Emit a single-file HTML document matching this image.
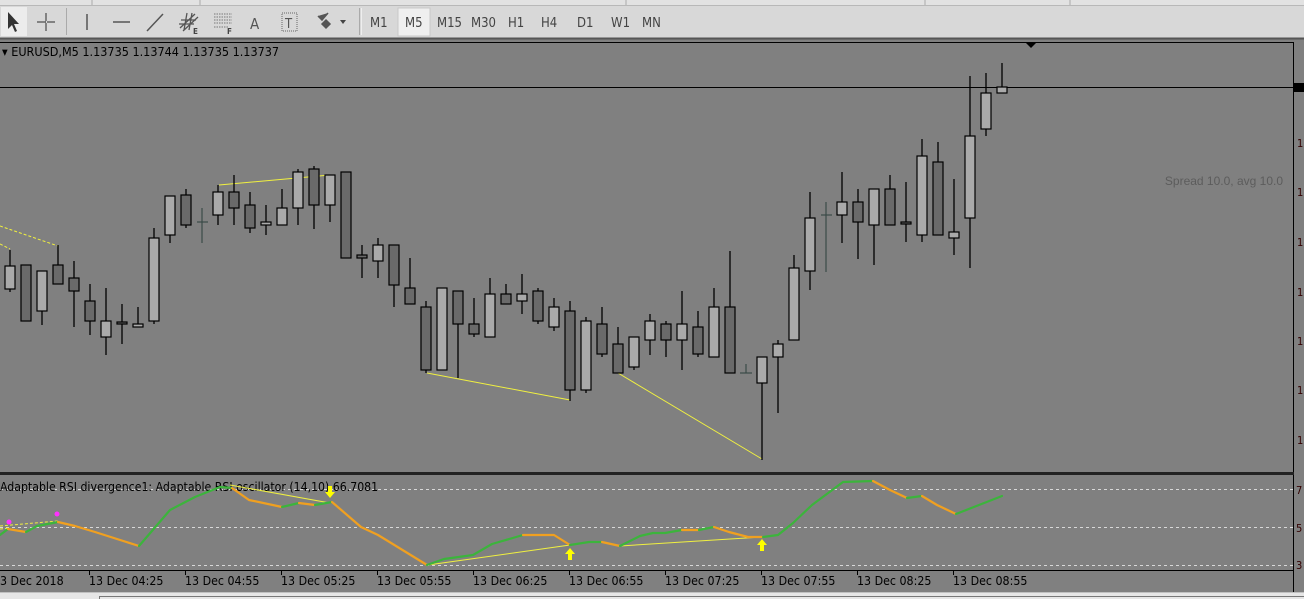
<!DOCTYPE html>
<html><head><meta charset="utf-8"><style>
html,body{margin:0;padding:0;width:1304px;height:599px;overflow:hidden;background:#808080;font-family:"DejaVu Sans Condensed","Liberation Sans",sans-serif}
svg{display:block}
</style></head><body>
<svg width="1304" height="599" viewBox="0 0 1304 599" xmlns="http://www.w3.org/2000/svg" font-family="DejaVu Sans Condensed, Liberation Sans, sans-serif">
<!-- toolbar -->
<rect x="0" y="0" width="1304" height="39" fill="#d8d8d8"/>
<rect x="0" y="0" width="1304" height="5" fill="#e2e2e2"/>
<line x1="0" y1="5.5" x2="1304" y2="5.5" stroke="#b8b8b8"/>
<line x1="92" y1="0" x2="92" y2="5" stroke="#aaa"/>
<line x1="200" y1="0" x2="200" y2="5" stroke="#aaa"/>
<line x1="626" y1="0" x2="626" y2="5" stroke="#aaa"/>
<line x1="925" y1="0" x2="925" y2="5" stroke="#aaa"/>
<line x1="1070" y1="0" x2="1070" y2="5" stroke="#aaa"/>
<rect x="1" y="7" width="26" height="29" fill="#ececec"/>
<path d="M8 12 L8 29 L12 25 L15 32 L17 31 L14 24 L19 24 Z" fill="#333"/>
<path d="M46 13 V31 M37 22 H55" stroke="#666" stroke-width="1.5"/>
<rect x="46" y="21" width="1" height="2" fill="#d8d8d8"/>
<line x1="66.5" y1="8" x2="66.5" y2="35" stroke="#aaa"/>
<line x1="87" y1="14" x2="87" y2="30" stroke="#555" stroke-width="1.5"/>
<line x1="113" y1="22" x2="130" y2="22" stroke="#555" stroke-width="1.5"/>
<line x1="147" y1="31" x2="163" y2="14" stroke="#555" stroke-width="1.5"/>
<path d="M180 28 L195 14 M183 31 L198 17 M179 24 L194 24 M181 20 L196 20 M184 30 L187 13 M189 30 L192 13" stroke="#555" stroke-width="1.3"/>
<text x="193" y="34" font-size="8" font-weight="bold" fill="#444">E</text>
<path d="M214 14 H232 M214 17 H232 M214 20 H232 M214 23 H232 M214 27 H228" stroke="#777" stroke-dasharray="1.5 1" stroke-width="1"/>
<text x="227" y="34" font-size="8" font-weight="bold" fill="#444">F</text>
<text x="250" y="29" font-size="15" fill="#555">A</text>
<rect x="282" y="13" width="15" height="18" fill="none" stroke="#666" stroke-dasharray="1 1"/>
<text x="285" y="28" font-size="13" fill="#555">T</text>
<path d="M318 16 L322 20 L328 13 M322 24 L326 20 L330 24 L326 28 Z" stroke="#555" stroke-width="1.5" fill="#555"/>
<path d="M340 20 L346 20 L343 24 Z" fill="#444"/>
<line x1="359.5" y1="8" x2="359.5" y2="35" stroke="#aaa"/>
<line x1="361.5" y1="8" x2="361.5" y2="35" stroke="#eee"/>
<rect x="398" y="8" width="32" height="28" fill="#efefef" stroke="#c8c8c8"/>
<g font-size="13" fill="#444">
<text x="370" y="27">M1</text><text x="405" y="27">M5</text><text x="437" y="27">M15</text><text x="471" y="27">M30</text><text x="508" y="27">H1</text><text x="541" y="27">H4</text><text x="577" y="27">D1</text><text x="611" y="27">W1</text><text x="642" y="27">MN</text>
</g>
<line x1="0" y1="38.5" x2="1304" y2="38.5" stroke="#555" stroke-width="2"/>
<!-- frames -->
<path d="M0 42.5 H1293.5 V592" fill="none" stroke="#000"/>
<rect x="0" y="472" width="1294" height="3" fill="#222"/>
<line x1="0" y1="570.5" x2="1294" y2="570.5" stroke="#000"/>
<line x1="0" y1="87.5" x2="1293" y2="87.5" stroke="#000"/>
<rect x="1294" y="83" width="10" height="9" fill="#000"/>
<path d="M1025 42 L1037 42 L1031 48 Z" fill="#000"/>
<g font-size="11" fill="#300">
<text x="1297" y="147">1</text><text x="1297" y="196">1</text><text x="1297" y="246">1</text><text x="1297" y="296">1</text><text x="1297" y="345">1</text><text x="1297" y="394">1</text><text x="1297" y="444">1</text>
<text x="1296" y="494">7</text><text x="1296" y="532">5</text><text x="1296" y="569">3</text>
</g>
<text x="2" y="56" font-size="12.5" fill="#000">▾ EURUSD,M5  1.13735 1.13744 1.13735 1.13737</text>
<text x="1283" y="185" font-size="12" fill="#5c5c5c" text-anchor="end" font-family="Liberation Sans, sans-serif">Spread 10.0, avg 10.0</text>
<!-- yellow lines main -->
<g stroke="#f0f040" stroke-width="1" fill="none">
<line x1="219" y1="185" x2="330" y2="175"/>
<line x1="427" y1="373" x2="570" y2="400"/>
<line x1="618" y1="373" x2="762" y2="459"/>
<line x1="0" y1="226" x2="58" y2="246" stroke-dasharray="3 2"/>
<line x1="0" y1="244" x2="10" y2="249" stroke-dasharray="3 2"/>
</g>
<!-- candles -->
<g stroke="#000" stroke-width="1.3">
<line x1="10" y1="250" x2="10" y2="292"/><line x1="26" y1="265" x2="26" y2="321"/><line x1="42" y1="271" x2="42" y2="325"/><line x1="58" y1="245" x2="58" y2="284"/><line x1="74" y1="261" x2="74" y2="327"/><line x1="90" y1="284" x2="90" y2="335"/><line x1="106" y1="288" x2="106" y2="355"/><line x1="122" y1="304" x2="122" y2="344"/><line x1="138" y1="307" x2="138" y2="327"/><line x1="154" y1="228" x2="154" y2="324"/><line x1="170" y1="196" x2="170" y2="243"/><line x1="186" y1="189" x2="186" y2="228"/><line x1="218" y1="185" x2="218" y2="225"/><line x1="234" y1="175" x2="234" y2="225"/><line x1="250" y1="192" x2="250" y2="233"/><line x1="266" y1="205" x2="266" y2="235"/><line x1="282" y1="189" x2="282" y2="225"/><line x1="298" y1="169" x2="298" y2="225"/><line x1="314" y1="166" x2="314" y2="229"/><line x1="330" y1="175" x2="330" y2="222"/><line x1="362" y1="245" x2="362" y2="278"/><line x1="378" y1="238" x2="378" y2="278"/><line x1="394" y1="245" x2="394" y2="307"/><line x1="410" y1="258" x2="410" y2="304"/>
<line x1="426" y1="301" x2="426" y2="373"/><line x1="458" y1="291" x2="458" y2="378"/><line x1="474" y1="298" x2="474" y2="337"/><line x1="490" y1="278" x2="490" y2="337"/><line x1="506" y1="284" x2="506" y2="304"/><line x1="522" y1="274" x2="522" y2="314"/><line x1="538" y1="288" x2="538" y2="324"/><line x1="554" y1="298" x2="554" y2="331"/><line x1="570" y1="301" x2="570" y2="401"/><line x1="586" y1="317" x2="586" y2="393"/><line x1="602" y1="307" x2="602" y2="357"/><line x1="618" y1="327" x2="618" y2="373"/><line x1="634" y1="337" x2="634" y2="370"/><line x1="650" y1="314" x2="650" y2="355"/><line x1="666" y1="321" x2="666" y2="357"/><line x1="682" y1="291" x2="682" y2="370"/><line x1="698" y1="311" x2="698" y2="357"/><line x1="714" y1="288" x2="714" y2="357"/><line x1="730" y1="251" x2="730" y2="373"/><line x1="762" y1="357" x2="762" y2="460"/><line x1="778" y1="340" x2="778" y2="413"/><line x1="794" y1="255" x2="794" y2="340"/>
<line x1="810" y1="192" x2="810" y2="290"/><line x1="842" y1="172" x2="842" y2="243"/><line x1="858" y1="189" x2="858" y2="259"/><line x1="874" y1="189" x2="874" y2="265"/><line x1="890" y1="175" x2="890" y2="225"/><line x1="906" y1="182" x2="906" y2="242"/><line x1="922" y1="139" x2="922" y2="242"/><line x1="938" y1="142" x2="938" y2="235"/><line x1="954" y1="179" x2="954" y2="255"/><line x1="970" y1="76" x2="970" y2="268"/><line x1="986" y1="73" x2="986" y2="136"/><line x1="1002" y1="63" x2="1002" y2="93"/>
</g>
<g stroke="#000" stroke-width="1.2" fill="#aaaaaa">
<rect x="5" y="266" width="10" height="23"/><rect x="37" y="271" width="10" height="40"/><rect x="101" y="321" width="10" height="16"/><rect x="133" y="324" width="10" height="3"/><rect x="149" y="238" width="10" height="83"/><rect x="165" y="196" width="10" height="39"/><rect x="213" y="192" width="10" height="23"/><rect x="261" y="222" width="10" height="3"/><rect x="277" y="208" width="10" height="17"/><rect x="293" y="172" width="10" height="36"/><rect x="325" y="175" width="10" height="30"/><rect x="373" y="245" width="10" height="16"/>
<rect x="437" y="288" width="10" height="82"/><rect x="485" y="294" width="10" height="43"/><rect x="517" y="294" width="10" height="7"/><rect x="549" y="307" width="10" height="20"/><rect x="581" y="321" width="10" height="69"/><rect x="629" y="337" width="10" height="30"/><rect x="645" y="321" width="10" height="19"/><rect x="677" y="324" width="10" height="16"/><rect x="709" y="307" width="10" height="50"/><rect x="757" y="357" width="10" height="26"/><rect x="773" y="344" width="10" height="13"/><rect x="789" y="268" width="10" height="72"/>
<rect x="805" y="218" width="10" height="53"/><rect x="837" y="202" width="10" height="13"/><rect x="869" y="189" width="10" height="36"/><rect x="917" y="156" width="10" height="79"/><rect x="949" y="232" width="10" height="6"/><rect x="965" y="136" width="10" height="82"/><rect x="981" y="93" width="10" height="36"/><rect x="997" y="87" width="10" height="6"/>
</g>
<g stroke="#000" stroke-width="1.2" fill="#6a6a6a">
<rect x="21" y="265" width="10" height="56"/><rect x="53" y="265" width="10" height="19"/><rect x="69" y="278" width="10" height="13"/><rect x="85" y="301" width="10" height="20"/><rect x="117" y="322" width="10" height="2"/><rect x="181" y="195" width="10" height="30"/><rect x="229" y="192" width="10" height="16"/><rect x="245" y="205" width="10" height="23"/><rect x="309" y="169" width="10" height="36"/><rect x="341" y="172" width="10" height="86"/><rect x="357" y="255" width="10" height="3"/><rect x="389" y="245" width="10" height="40"/><rect x="405" y="288" width="10" height="16"/>
<rect x="421" y="307" width="10" height="63"/><rect x="453" y="291" width="10" height="33"/><rect x="469" y="324" width="10" height="10"/><rect x="501" y="294" width="10" height="10"/><rect x="533" y="291" width="10" height="30"/><rect x="565" y="311" width="10" height="79"/><rect x="597" y="324" width="10" height="30"/><rect x="613" y="344" width="10" height="29"/><rect x="661" y="324" width="10" height="16"/><rect x="693" y="327" width="10" height="27"/><rect x="725" y="307" width="10" height="66"/>
<rect x="853" y="202" width="10" height="20"/><rect x="885" y="189" width="10" height="36"/><rect x="901" y="222" width="10" height="2"/><rect x="933" y="162" width="10" height="73"/>
</g>
<g stroke="#3a4a48" stroke-width="1.2">
<line x1="202" y1="208" x2="202" y2="243"/><line x1="197" y1="222" x2="208" y2="222"/>
<line x1="746" y1="364" x2="746" y2="373"/><line x1="740" y1="373" x2="752" y2="373"/>
<line x1="826" y1="202" x2="826" y2="272"/><line x1="821" y1="215" x2="832" y2="215"/>
</g>
<!-- subwindow -->
<g stroke="#d8d8d8" stroke-dasharray="3 3" stroke-width="1">
<line x1="0" y1="489.5" x2="1293" y2="489.5"/><line x1="0" y1="527.5" x2="1293" y2="527.5"/><line x1="0" y1="565.5" x2="1293" y2="565.5"/>
</g>
<text x="0" y="491" font-size="12.2" fill="#000">Adaptable RSI divergence1: Adaptable RSI oscillator (14,10) 66.7081</text>
<g stroke="#f0f040" stroke-width="1" fill="none">
<line x1="230" y1="485" x2="330" y2="503"/>
<line x1="428" y1="565" x2="570" y2="545"/>
<line x1="620" y1="546" x2="762" y2="537"/>
<line x1="0" y1="526" x2="58" y2="521" stroke-dasharray="3 2"/>
<line x1="0" y1="529" x2="10" y2="528" stroke-dasharray="3 2"/>
</g>
<g fill="none" stroke-width="2.2" stroke-linejoin="round" stroke-linecap="round">
<polyline stroke="#3cb43c" points="0,535 8,529"/>
<polyline stroke="#f0a020" points="8,529 26,532"/>
<polyline stroke="#3cb43c" points="26,532 37,526 58,522"/>
<polyline stroke="#f0a020" points="58,522 75,526 95,532 139,546"/>
<polyline stroke="#3cb43c" points="139,546 170,510 195,497 220,487 232,488"/>
<polyline stroke="#f0a020" points="232,488 249,500 282,507"/>
<polyline stroke="#3cb43c" points="282,507 299,503"/>
<polyline stroke="#f0a020" points="299,503 315,505"/>
<polyline stroke="#3cb43c" points="315,505 332,502"/>
<polyline stroke="#f0a020" points="332,502 361,527 378,535 427,565"/>
<polyline stroke="#3cb43c" points="427,565 444,559 473,555 492,544 523,535"/>
<polyline stroke="#f0a020" points="523,535 554,535 570,545"/>
<polyline stroke="#3cb43c" points="570,545 589,542 602,542"/>
<polyline stroke="#f0a020" points="602,542 620,546"/>
<polyline stroke="#3cb43c" points="620,546 640,536 653,533 665,533 682,530"/>
<polyline stroke="#f0a020" points="682,530 699,530"/>
<polyline stroke="#3cb43c" points="699,530 714,527"/>
<polyline stroke="#f0a020" points="714,527 729,532 748,537 763,537"/>
<polyline stroke="#3cb43c" points="763,537 778,535 793,523 812,505 843,482 873,481"/>
<polyline stroke="#f0a020" points="873,481 890,490 907,498"/>
<polyline stroke="#3cb43c" points="907,498 922,496"/>
<polyline stroke="#f0a020" points="922,496 937,505 956,514"/>
<polyline stroke="#3cb43c" points="956,514 1002,496"/>
</g>
<circle cx="9" cy="522" r="2.5" fill="#ff30ff"/>
<circle cx="57" cy="514" r="2.5" fill="#ff30ff"/>
<g fill="#ffff00">
<path d="M328 486 h4 v6 h3 l-5 6 l-5 -6 h3 z"/>
<path d="M568 560 h4 v-6 h3 l-5 -6 l-5 6 h3 z"/>
<path d="M760 551 h4 v-6 h3 l-5 -6 l-5 6 h3 z"/>
</g>
<!-- time axis -->
<g stroke="#000"><line x1="89.5" y1="571" x2="89.5" y2="575"/><line x1="185.5" y1="571" x2="185.5" y2="575"/><line x1="281.5" y1="571" x2="281.5" y2="575"/><line x1="377.5" y1="571" x2="377.5" y2="575"/><line x1="473.5" y1="571" x2="473.5" y2="575"/><line x1="569.5" y1="571" x2="569.5" y2="575"/><line x1="665.5" y1="571" x2="665.5" y2="575"/><line x1="761.5" y1="571" x2="761.5" y2="575"/><line x1="857.5" y1="571" x2="857.5" y2="575"/><line x1="953.5" y1="571" x2="953.5" y2="575"/></g>
<g font-size="12.3" fill="#000">
<text x="0" y="585">3 Dec 2018</text><text x="89" y="585">13 Dec 04:25</text><text x="185" y="585">13 Dec 04:55</text><text x="281" y="585">13 Dec 05:25</text><text x="377" y="585">13 Dec 05:55</text><text x="473" y="585">13 Dec 06:25</text><text x="569" y="585">13 Dec 06:55</text><text x="665" y="585">13 Dec 07:25</text><text x="761" y="585">13 Dec 07:55</text><text x="857" y="585">13 Dec 08:25</text><text x="953" y="585">13 Dec 08:55</text>
</g>
<rect x="0" y="593" width="1304" height="6" fill="#e6e6e6"/>
<line x1="0" y1="592.5" x2="1304" y2="592.5" stroke="#c0c0c0"/>
<path d="M99.5 599 V596.5 H1304" fill="none" stroke="#777"/>
</svg>
</body></html>
